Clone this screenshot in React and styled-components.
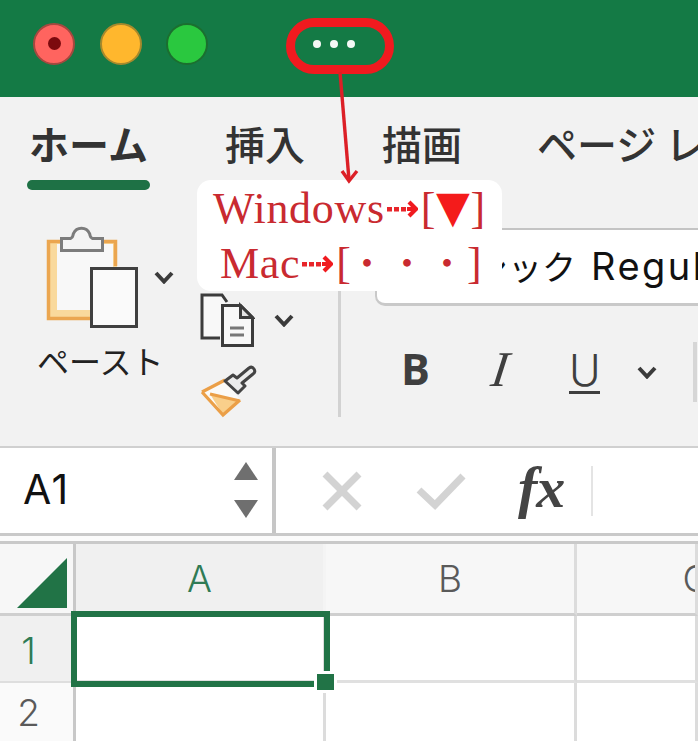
import React from "react";
import styled, { createGlobalStyle } from "styled-components";

const Global = createGlobalStyle`
  html, body { margin: 0; padding: 0; background: #fff; }
  * { box-sizing: border-box; }
`;
const SANS = `"Noto Sans CJK JP", "Noto Sans", sans-serif`;
const UI = `Inter, "Noto Sans CJK JP", sans-serif`;
const GREEN = "#217346";

const Page = styled.div`
  position: relative; width: 698px; height: 741px; overflow: hidden; background: #fff; font-family: ${SANS};
`;
const TitleBar = styled.div`
  height: 97px; background: #147a45; display: flex; align-items: center; padding: 0 0 10px 33px;
`;
const Light = styled.div`
  width: 42px; height: 42px; border-radius: 50%; margin-right: 24.5px; display: flex; align-items: center; justify-content: center;
  background: ${p => p.$c}; border: 2px solid ${p => p.$b};
`;
const LightDot = styled.div`width: 13px; height: 13px; border-radius: 50%; background: #7c0a0e;`;
const Dots = styled.div`display: flex; gap: 9px; margin-left: 80.5px;`;
const Dot = styled.div`width: 8px; height: 8px; border-radius: 50%; background: #f4f8f5;`;

const Ribbon = styled.div`height: 349px; background: #f2f2f2; display: flex; flex-direction: column;`;
const Tabs = styled.div`height: 93px; display: flex; padding-left: 27px; white-space: nowrap; overflow: hidden;`;
const Tab = styled.div`
  display: flex; flex-direction: column; align-items: ${p => p.$start ? "flex-start" : "center"}; width: ${p => p.$w}px; margin-right: ${p => p.$m}px;
  font-size: 40px; line-height: 56px; padding-top: 18px; color: #333; font-weight: ${p => p.$on ? 700 : 500}; flex: none;
`;
const TabBar = styled.div`width: 123px; height: 10px; border-radius: 5px; background: #1e7145; margin-top: 9px;`;

const Tools = styled.div`flex: 1; display: flex; padding-left: 38px;`;
const PasteGroup = styled.div`width: 162px; flex: none; padding-top: 36px; color: #222;`;
const PasteTop = styled.div`display: flex; align-items: center; padding-left: 8px; gap: 16px;`;
const PasteLabel = styled.div`font-size: 32px; line-height: 40px; margin-top: 12px; margin-left: -1px; letter-spacing: 0;`;
const ClipCol = styled.div`width: 138px; flex: none; padding-top: 103px; display: flex; flex-direction: column; gap: 19px;`;
const ClipRow = styled.div`display: flex; align-items: center; gap: 19px;`;
const VSep = styled.div`width: 3px; height: 127px; margin-top: 100px; background: #d2d2d2; flex: none;`;
const FontGroup = styled.div`flex: 1; min-width: 0; margin-left: 34px; padding-top: 38px;`;
const FontBox = styled.div`
  height: 78px; background: #fff; border-top: 2px solid #c4c4c4; border-bottom: 3px solid #c9c9c9; border-left: 2px solid #c9c9c9;
  border-bottom-left-radius: 10px; padding-left: 29px; font: 400 38px/72px ${UI}; letter-spacing: 2.5px; color: #111; white-space: nowrap; overflow: hidden;
`;
const FontName = styled.span`font-size: 34px; letter-spacing: 0; margin-right: 15px;`;
const FontTools = styled.div`display: flex; align-items: center; height: 60px; margin-top: 36px; color: #3f3f3f;`;
const Bold = styled.span`font: 700 43px/60px "Open Sans", sans-serif; margin: -6px 0 0 26px; width: 87px;`;
const Italic = styled.span`
  display: block; font: italic 400 50px/60px "Liberation Serif", serif; width: 81px; margin-top: -6px; padding-left: 4px; transform: skewX(-8deg);
`;
const Under = styled.span`
  font: 300 43px/40px Inter, sans-serif; width: 31px; border-bottom: 3px solid #3f3f3f; height: 44px; text-align: center; margin-top: -1px; margin-right: 37px;
`;
const RightEdge = styled.div`width: 4px; height: 60px; background: #d6d6d6; margin-left: 36px; flex: none;`;

const Callout = styled.div`
  position: absolute; left: 197px; top: 180px; width: 305px; height: 111px; background: #fff; border-radius: 14px;
  font: 400 44px/55px "Liberation Serif", serif; color: #c92a30; padding-top: 1px;
`;
const CalloutLine = styled.div`display: flex; align-items: center; height: 55px; padding-left: ${p => p.$pl}px; white-space: nowrap;`;
const Word = styled.span`letter-spacing: 0.7px;`;
const Tri = styled.span`
  font-family: "DejaVu Sans", sans-serif; font-size: 44px; width: 35px; display: flex; justify-content: center; color: #f41b1b; line-height: 1; margin-top: -4px;
`;
const NakaGroup = styled.span`display: flex; margin-left: -4px;`;
const NakaDot = styled.span`font-family: "Noto Sans CJK JP", sans-serif; font-size: 36px; width: 40px; text-align: center; line-height: 1; margin-top: -5px;`;

const Ring = styled.div`
  position: absolute; left: 286px; top: 18px; width: 108px; height: 56px; border: 9px solid #f01a1f; border-radius: 28px;
`;
const Pointer = styled.svg`position: absolute; left: 325px; top: 70px;`;

const Formula = styled.div`
  height: 90px; background: #fff; border-bottom: 3px solid #c9c9c9; display: flex; border-top: 2px solid #d0d0d0;
`;
const NameBox = styled.div`
  width: 276px; border-right: 4px solid #c6c6c6; display: flex; align-items: center; justify-content: space-between;
  font: 400 41px/1 ${UI}; letter-spacing: 1.5px; color: #111; padding: 0 14px 2px 23px;
`;
const Stepper = styled.div`display: flex; flex-direction: column; gap: 20px;`;
const FxText = styled.span`
  font: italic 700 58px/1 "Liberation Serif", serif; color: #444; margin-left: 52px; margin-top: -6px; letter-spacing: -1px;
`;
const FormulaTools = styled.div`display: flex; align-items: center; padding-left: 46px;`;
const FormulaSep = styled.div`width: 2px; height: 50px; background: #e4e4e4; margin-left: 27px;`;
const Gap = styled.div`height: 8px; background: #fbfbfb; border-bottom: 3px solid #c9c9c9;`;

const Sheet = styled.div`display: grid; grid-template-columns: 76px 250px 251px 1fr; grid-template-rows: 72px 67px 1fr; height: 197px;`;
const Head = styled.div`
  display: flex; align-items: center; justify-content: center; font: 300 37px/1 ${UI};
  color: ${p => p.$on ? "#2f7b55" : "#5a5a5a"}; background: ${p => p.$on ? "#f0f0f0" : "#f7f7f7"};
  border-right: 3px solid ${p => p.$line || "#dcdcdc"}; border-bottom: 3px solid #cfcfcf; overflow: hidden;
`;
const HeadClip = styled.span`margin-left: 120px; white-space: nowrap;`;
const Corner = styled(Head)`align-items: flex-start; justify-content: flex-start; padding: 14px 0 0 17px; background: #f7f7f7; border-right-color: #c8c8c8;`;
const RowHead = styled(Head)`
  color: ${p => p.$on ? "#2f7b55" : "#5a5a5a"}; background: ${p => p.$on ? "#f0f0f0" : "#fafafa"};
  border-bottom: ${p => p.$last ? "none" : "2px solid #dedede"}; padding-right: 16px; border-right-color: #c8c8c8; padding-top: ${p => p.$last ? 0 : 4}px;
`;
const Cell = styled.div`
  background: #fff; border-right: 3px solid #dcdcdc; border-bottom: ${p => p.$last ? "none" : "3px solid #e0e0e0"};
`;
const ActiveCell = styled(Cell)`position: relative; z-index: 1;`;
const Selection = styled.div`position: absolute; left: -5px; top: -5px; width: 259px; height: 76px; border: 6px solid ${GREEN};`;
const Handle = styled.div`
  position: absolute; right: -13px; bottom: -12px; width: 23px; height: 22px; background: ${GREEN}; border: 3px solid #fff;
`;

const Chevron = ({ w = 20 }) => (
  <svg width={w} height={w * 0.65} viewBox="0 0 20 13" fill="none">
    <polyline points="2,2 10,10.5 18,2" stroke="#3b3b3b" strokeWidth="4" />
  </svg>
);
const PasteIcon = () => (
  <svg width="92" height="102" viewBox="0 0 92 102" style={{ flex: "none" }}>
    <rect x="1" y="14" width="70" height="80" fill="#f9d99c" />
    <rect x="11" y="18" width="56" height="66" fill="#f8f8f8" />
    <path d="M44 92.5H2.5V15.5H69.5V40" fill="none" stroke="#eba650" strokeWidth="3.5" />
    <path d="M15.5 24.5V12.5h9c3-1 2-3 3-5 3-7 13-7 16 0 1 2 0 4 3 5h10v12z" fill="#f4f4f4" stroke="#7c7c7c" strokeWidth="3" />
    <rect x="45.5" y="42.5" width="45" height="58" fill="#fafafa" stroke="#404040" strokeWidth="3" />
  </svg>
);
const CopyIcon = () => (
  <svg width="55" height="55" viewBox="0 0 55 55">
    <path d="M20 45H2V2h20l5 7" fill="#f8f8f8" stroke="#3c3c3c" strokeWidth="3" />
    <path d="M22.5 52.5V12.5h18l12 12v28z" fill="#f8f8f8" stroke="#3c3c3c" strokeWidth="3" />
    <path d="M40.5 12.5v12h12z" fill="#e4e4e4" stroke="#3c3c3c" strokeWidth="3" />
    <path d="M30 35h14M30 42h14" stroke="#777" strokeWidth="3" />
  </svg>
);
const BrushIcon = () => (
  <svg width="56" height="50" viewBox="0 0 56 50" style={{ overflow: "visible" }}>
    <path d="M2 25 L25 13 L40 33 L23 48 Z" fill="#fbfaf7" />
    <path d="M10 27 L40 34 L23 48 Z" fill="#f9cf8b" />
    <path d="M2 25 L25 13 M2 25 L23 48 L40 33 M10 27 L40 34" fill="none" stroke="#eb9f47" strokeWidth="3.2" />
    <path d="M25 14 L33 8 L37 11 L49 1 Q52 -1 54 2 Q56 5 53 7 L42 16 L45 19 L38 26 Z" fill="#ececec" stroke="#444" strokeWidth="3" strokeLinejoin="round" />
  </svg>
);
const DottedArrow = () => (
  <svg width="31" height="18" viewBox="0 0 31 18" style={{ margin: "0 3px 0 2px", flex: "none" }}>
    <rect x="0" y="7" width="5" height="4.5" fill="#e8252a" />
    <rect x="7" y="7" width="5" height="4.5" fill="#e8252a" />
    <rect x="14" y="7" width="5" height="4.5" fill="#e8252a" />
    <path d="M20 9h8M22 2l7 7-7 7" fill="none" stroke="#f01a1f" strokeWidth="4.2" />
  </svg>
);
const StepUp = () => <svg width="24" height="18" viewBox="0 0 24 18"><path d="M12 0 L24 18 H0 Z" fill="#6f6f6f" /></svg>;
const StepDown = () => <svg width="24" height="18" viewBox="0 0 24 18"><path d="M0 0 H24 L12 18 Z" fill="#6f6f6f" /></svg>;
const Cross = () => (
  <svg width="40" height="40" viewBox="0 0 40 40"><path d="M3 3 L37 37 M37 3 L3 37" stroke="#d3d3d3" strokeWidth="7" /></svg>
);
const Check = () => (
  <svg width="50" height="38" viewBox="0 0 50 38" style={{ marginLeft: 54 }}><path d="M3 18 L19 33 L47 4" fill="none" stroke="#d3d3d3" strokeWidth="7" /></svg>
);
const CornerMark = () => <svg width="50" height="50" viewBox="0 0 50 50"><path d="M50 0V50H0Z" fill="#217346" /></svg>;

export default function App() {
  return (
    <Page>
      <Global />
      <TitleBar>
        <Light $c="#ff645f" $b="#a5483f"><LightDot /></Light>
        <Light $c="#ffb72d" $b="#a7892c" />
        <Light $c="#2ac83f" $b="#1b6f2f" />
        <Dots><Dot /><Dot /><Dot /></Dots>
      </TitleBar>
      <Ribbon>
        <Tabs>
          <Tab $w={123} $m={73} $on>ホーム<TabBar /></Tab>
          <Tab $w={84} $m={73}>挿入</Tab>
          <Tab $w={84} $m={73}>描画</Tab>
          <Tab $w={300} $m={0} $start>ページ レイアウト</Tab>
        </Tabs>
        <Tools>
          <PasteGroup>
            <PasteTop><PasteIcon /><Chevron /></PasteTop>
            <PasteLabel>ペースト</PasteLabel>
          </PasteGroup>
          <ClipCol>
            <ClipRow><CopyIcon /><Chevron /></ClipRow>
            <ClipRow><BrushIcon /></ClipRow>
          </ClipCol>
          <VSep />
          <FontGroup>
            <FontBox><FontName>游ゴシック</FontName>Regular</FontBox>
            <FontTools>
              <Bold>B</Bold>
              <Italic>I</Italic>
              <Under>U</Under>
              <Chevron />
              <RightEdge />
            </FontTools>
          </FontGroup>
        </Tools>
      </Ribbon>
      <Formula>
        <NameBox>A1<Stepper><StepUp /><StepDown /></Stepper></NameBox>
        <FormulaTools>
          <Cross />
          <Check />
          <FxText>fx</FxText>
          <FormulaSep />
        </FormulaTools>
      </Formula>
      <Gap />
      <Sheet>
        <Corner><CornerMark /></Corner>
        <Head $on $line="#f4f4f4">A</Head>
        <Head>B</Head>
        <Head><HeadClip>C</HeadClip></Head>
        <RowHead $on>1</RowHead>
        <ActiveCell><Selection><Handle /></Selection></ActiveCell>
        <Cell />
        <Cell />
        <RowHead $last>2</RowHead>
        <Cell $last />
        <Cell $last />
        <Cell $last />
      </Sheet>
      <Callout>
        <CalloutLine $pl={16}><Word>Windows</Word><DottedArrow />[<Tri>▼</Tri>]</CalloutLine>
        <CalloutLine $pl={23}><Word>Mac</Word><DottedArrow />[<NakaGroup><NakaDot>・</NakaDot><NakaDot>・</NakaDot><NakaDot>・</NakaDot></NakaGroup>]</CalloutLine>
      </Callout>
      <Ring />
      <Pointer width="40" height="116" viewBox="0 0 40 116" fill="none">
        <path d="M15 2 L24 110" stroke="#dc1f26" strokeWidth="3.4" />
        <path d="M17 101 L24 111 L32 101" stroke="#dc1f26" strokeWidth="3.4" />
      </Pointer>
    </Page>
  );
}
